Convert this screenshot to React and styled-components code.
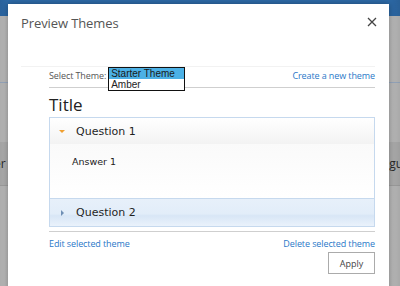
import React from 'react';
import styled, { createGlobalStyle } from 'styled-components';

const GlobalStyle = createGlobalStyle`
	html, body {
		margin: 0;
		padding: 0;
		width: 400px;
		height: 286px;
		overflow: hidden;
		background: #b9b9b9;
	}
`;

// page behind the dialog
const Page = styled.div`
	position: relative;
	width: 400px;
	height: 286px;
	overflow: hidden;
	font-family: "Open Sans", "Noto Sans", sans-serif;
	background: #bcbcbc;
`;

const SuiteBar = styled.div`
	height: 16px;
	background: #2d6aa8;
`;

const BgStrip = styled.div`
	height: ${props => props.h}px;
	background: ${props => props.bg || 'transparent'};
	border-bottom: 1px solid ${props => props.line || 'transparent'};
	display: flex;
	justify-content: space-between;
	align-items: center;
	font-family: "Open Sans", sans-serif;
	font-size: 12px;
	color: #2a2a2a;
`;

const BgText = styled.span`
	margin: ${props => props.m};
`;

const Shade = styled.div`
	position: absolute;
	inset: 0;
	background: linear-gradient(to right, rgba(0,0,0,.08), rgba(0,0,0,0) 8px, rgba(0,0,0,0) 388px, rgba(0,0,0,.1));
`;

// dialog
const Dialog = styled.div`
	position: absolute;
	left: 8px;
	top: 4px;
	width: 381px;
	height: 300px;
	background: #fff;
	box-shadow: 0 0 6px rgba(0,0,0,.35);
	display: flex;
	flex-direction: column;
`;

const TitleBar = styled.div`
	display: flex;
	justify-content: space-between;
	align-items: flex-start;
	padding: 10px 10px 0 13px;
	height: 52px;
`;

const DialogTitle = styled.h1`
	margin: 0;
	font-family: "Open Sans", sans-serif;
	font-weight: 400;
	font-size: 13px;
	color: #555;
	letter-spacing: -0.1px;
`;

const CloseButton = styled.button`
	border: 0;
	background: none;
	padding: 0;
	margin-top: 3px;
	width: 12px;
	height: 12px;
	cursor: pointer;
	display: flex;
`;

const Divider = styled.div`
	margin: 0 14px 0 13px;
	border-top: 1px solid #f2f2f2;
`;

const Body = styled.div`
	padding: 0 14px 0 41px;
	display: flex;
	flex-direction: column;
`;

const SelectRow = styled.div`
	height: 20px;
	display: flex;
	align-items: flex-start;
	border-bottom: 1px solid #cfcfcf;
`;

const FieldLabel = styled.span`
	font-family: "Open Sans", sans-serif;
	font-size: 9px;
	letter-spacing: -0.1px;
	color: #555;
	margin-top: 2px;
	margin-right: 2px;
`;

const ListBox = styled.div`
	position: relative;
	z-index: 1;
	width: 75px;
	border: 1px solid #111;
	background: #fff;
	display: flex;
	flex-direction: column;
`;

const ListOption = styled.div`
	height: 11px;
	line-height: 11px;
	padding-left: 2px;
	font-family: "Liberation Sans", sans-serif;
	font-size: 10px;
	color: ${props => props.selected ? '#1a1a1a' : '#222'};
	background: ${props => props.selected ? '#4cb1e6' : '#fff'};
`;

const Link = styled.a`
	font-family: "Open Sans", sans-serif;
	font-size: 9px;
	letter-spacing: -0.1px;
	color: #2a78c8;
	text-decoration: none;
	margin-left: ${props => props.push ? 'auto' : '0'};
	margin-top: ${props => props.mt || 0}px;
	cursor: pointer;
`;

const PreviewTitle = styled.h2`
	margin: 6px 0 1px;
	font-family: "Open Sans", sans-serif;
	font-weight: 400;
	font-size: 17px;
	line-height: 22px;
	color: #222;
`;

const Accordion = styled.div`
	border: 1px solid #c6d9ee;
	display: flex;
	flex-direction: column;
`;

const ItemHeader = styled.div`
	height: ${props => props.h}px;
	display: flex;
	align-items: center;
	padding-left: 9px;
	background: ${props => props.active
		? 'linear-gradient(to bottom, #ffffff, #f3f3f3)'
		: 'linear-gradient(to bottom, #e7f0fa 0%, #e2edf9 55%, #d8e6f6 62%, #eaf2fb 100%)'};
	border-top: ${props => props.active ? '0' : '1px solid #c6d9ee'};
	font-family: "DejaVu Sans", sans-serif;
	font-size: 11px;
	color: #1f1f1f;
`;

const Arrow = styled.span`
	width: 0;
	height: 0;
	margin-right: 11px;
	${props => props.open
		? 'border-left: 3px solid transparent; border-right: 3px solid transparent; border-top: 3px solid #f0a030; margin-top: 1px;'
		: 'border-top: 3px solid transparent; border-bottom: 3px solid transparent; border-left: 3px solid #6f8fb5; margin-left: 2px; margin-right: 12px;'}
`;

const ItemContent = styled.div`
	height: 54px;
	padding: 12px 0 0 22px;
	box-sizing: border-box;
	background: linear-gradient(to bottom, #fafafa, #ffffff);
	font-family: "DejaVu Sans", sans-serif;
	font-size: 9.5px;
	color: #222;
`;

const BottomRule = styled.div`
	margin-top: 4px;
	border-top: 1px solid #cfcfcf;
	display: flex;
	justify-content: space-between;
	padding-top: 5px;
`;

const ButtonRow = styled.div`
	display: flex;
	justify-content: flex-end;
	margin-top: 2px;
`;

const ApplyButton = styled.button`
	width: 47px;
	height: 22px;
	border: 1px solid #ababab;
	background: #fff;
	font-family: "Open Sans", sans-serif;
	font-size: 9px;
	color: #444;
	padding: 0;
	cursor: pointer;
`;

export default function App() {
	return (
		<Page>
			<GlobalStyle />
			<SuiteBar />
			<BgStrip h={26} />
			<BgStrip h={39} line="#9aabc2" />
			<BgStrip h={58} />
			<BgStrip h={43} bg="#b0b0b0" line="#a2a2a2">
				<BgText m="0 0 0 -6px">er</BgText>
				<BgText m="0 -3px 0 0">gu</BgText>
			</BgStrip>
			<Shade />
			<Dialog>
				<TitleBar>
					<DialogTitle>Preview Themes</DialogTitle>
					<CloseButton aria-label="Close">
						<svg width="10" height="10" viewBox="0 0 10 10">
							<path d="M1 1 L9 9 M9 1 L1 9" stroke="#444" strokeWidth="1.3" />
						</svg>
					</CloseButton>
				</TitleBar>
				<Divider />
				<Body>
					<SelectRow>
						<FieldLabel>Select Theme:</FieldLabel>
						<ListBox>
							<ListOption selected>Starter Theme</ListOption>
							<ListOption>Amber</ListOption>
						</ListBox>
						<Link push mt={2}>Create a new theme</Link>
					</SelectRow>
					<PreviewTitle>Title</PreviewTitle>
					<Accordion>
						<ItemHeader h={26} active>
							<Arrow open />
							Question 1
						</ItemHeader>
						<ItemContent>Answer 1</ItemContent>
						<ItemHeader h={27}>
							<Arrow />
							Question 2
						</ItemHeader>
					</Accordion>
					<BottomRule>
						<Link>Edit selected theme</Link>
						<Link>Delete selected theme</Link>
					</BottomRule>
					<ButtonRow>
						<ApplyButton>Apply</ApplyButton>
					</ButtonRow>
				</Body>
			</Dialog>
		</Page>
	);
}
